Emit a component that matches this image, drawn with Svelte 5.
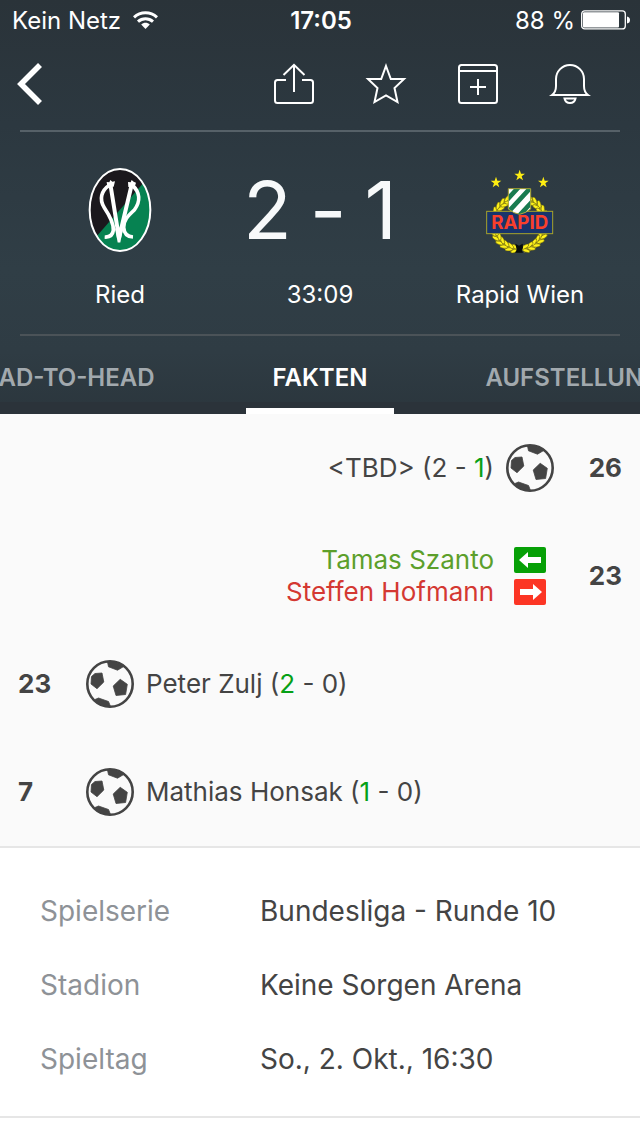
<script lang="ts">
	type MatchEvent = {
		minute: number;
		side: 'home' | 'away';
		type: 'goal' | 'sub';
		player: string;
		playerOut?: string;
		score?: [number, number];
	};

	const tabs = ['HEAD-TO-HEAD', 'FAKTEN', 'AUFSTELLUNG'];
	let activeTab = $state('FAKTEN');

	const events: MatchEvent[] = [
		{ minute: 26, side: 'away', type: 'goal', player: '<TBD>', score: [2, 1] },
		{
			minute: 23,
			side: 'away',
			type: 'sub',
			player: 'Tamas Szanto',
			playerOut: 'Steffen Hofmann'
		},
		{ minute: 23, side: 'home', type: 'goal', player: 'Peter Zulj', score: [2, 0] },
		{ minute: 7, side: 'home', type: 'goal', player: 'Mathias Honsak', score: [1, 0] }
	];

	const info = [
		{ label: 'Spielserie', value: 'Bundesliga - Runde 10' },
		{ label: 'Stadion', value: 'Keine Sorgen Arena' },
		{ label: 'Spieltag', value: 'So., 2. Okt., 16:30' }
	];

	const leafAngles = [
		24, 36, 48, 60, 72, 84, 96, 108, 120, 132, 144, 156, 168, 192, 204, 216, 228, 240, 252, 264, 276,
		288, 300, 312, 324, 336
	];
	const starPoints = '0,-17 4,-5 16,-5 6,3 10,15 0,8 -10,15 -6,3 -16,-5 -4,-5';
</script>

{#snippet ball()}
	<svg class="ball" viewBox="0 0 48 48" role="img" aria-label="Tor">
		<circle cx="24" cy="24" r="22.7" fill="none" stroke="#444" stroke-width="2.6" />
		<g fill="#444" stroke="#444" stroke-width=".8" stroke-linejoin="round">
			<path d="M9 13.5 16 13 17.8 22 11 28.7 5 24 5.5 16.5Z" />
			<path d="M34.2 19.3 41.3 24.3 39.6 34.5 30 35.5 27.2 26Z" />
			<path d="M21.5 2H28L38.5 6 31.5 10.2 22.5 6.8Z" />
			<path d="M9 39.5 12.5 38 22.5 41.5 24.5 46.5H20L13 44.5Z" />
		</g>
	</svg>
{/snippet}

<div class="app">
	<header>
		<div class="status">
			<div class="carrier">
				<span>Kein Netz</span>
				<svg width="25" height="18" viewBox="0 0 25 18" aria-hidden="true">
					<g fill="none" stroke="#fff" stroke-width="3">
						<path d="M1 6.3C7.5.2 17.5.2 24 6.3" />
						<path d="M5 10.6C9.3 6.7 15.7 6.7 20 10.6" />
					</g>
					<path d="M8.2 13.5C10.7 11.3 14.3 11.3 16.8 13.5L12.5 18Z" fill="#fff" />
				</svg>
			</div>
			<strong>17:05</strong>
			<div class="power">
				<span>88 %</span>
				<svg width="49" height="20" viewBox="0 0 49 20" aria-hidden="true">
					<rect x=".7" y=".9" width="43.6" height="18" rx="3" fill="none" stroke="#fff" stroke-width="1.3" />
					<rect x="2" y="2.3" width="36" height="15.3" rx="1" fill="#fff" />
					<path d="M46 6.5Q49 7 49 10T46 13.5Z" fill="#fff" />
				</svg>
			</div>
		</div>

		<nav class="actions">
			<button class="back" aria-label="Zurück">
				<svg width="28" height="44" viewBox="0 0 28 44">
					<path d="M24 3 5 22 24 41" fill="none" stroke="#fff" stroke-width="5.6" />
				</svg>
			</button>
			<button aria-label="Teilen">
				<svg width="44" height="44" viewBox="0 0 44 44">
					<path d="M14 18H5.5Q3 18 3 20.5V38.5Q3 41 5.5 41H38.5Q41 41 41 38.5V20.5Q41 18 38.5 18H30M22 30V3M11.5 13 22 2.8 32.5 13" />
				</svg>
			</button>
			<button aria-label="Favorit">
				<svg width="44" height="44" viewBox="0 0 44 44">
					<path d="M22 4 26.8 17H40L30.5 26 33.5 40 22 33.5 10.5 40 13.5 26 4 17H17.2Z" />
				</svg>
			</button>
			<button aria-label="Zum Kalender hinzufügen">
				<svg width="44" height="44" viewBox="0 0 44 44">
					<rect x="3" y="3" width="38" height="38" rx="2.5" />
					<path d="M3 9H41M22 17V33M14 25H30" />
				</svg>
			</button>
			<button aria-label="Benachrichtigungen">
				<svg width="44" height="44" viewBox="0 0 44 44">
					<path d="M4 33Q8 30 8 24V17A14 14 0 0 1 36 17V24Q36 30 40 33Z" />
					<path d="M16.5 36.5H27.5Q26.5 41 22 41T16.5 36.5Z" />
				</svg>
			</button>
		</nav>

		<section class="match">
			<div class="team">
				<svg width="80" height="100" viewBox="0 0 240 300" role="img" aria-label="Ried">
					<defs>
						<clipPath id="oval"><ellipse cx="120" cy="150" rx="91" ry="123" /></clipPath>
					</defs>
					<g clip-path="url(#oval)">
						<rect width="240" height="300" fill="#1b181d" />
						<path d="M240 12V300H0V286Z" fill="#068251" />
					</g>
					<ellipse cx="120" cy="150" rx="91" ry="123" fill="none" stroke="#fff" stroke-width="6" />
					<g fill="none" stroke="#fff" stroke-width="11">
						<path d="M89 75C63 92 57 119 73 143 87 164 102 188 100 211 98 227 88 232 74 231" />
						<path d="M91 72 117 234 155 74" stroke-width="12" />
						<path d="M156 75C181 97 182 124 163 150 145 167 130 180 131 202 132 218 140 230 159 231" />
						<path d="M109 205 117 247 125 205" stroke-width="8" />
					</g>
					<g fill="#fff">
						<path d="M80 66 88 67 91 60 97 65 105 64 101 80H82Z" />
						<path d="M144 66 152 67 155 60 161 65 168 68 164 81H145Z" />
					</g>
				</svg>
				<span>Ried</span>
			</div>
			<div class="result">
				<div class="score"><span>2</span><span>-</span><span>1</span></div>
				<span>33:09</span>
			</div>
			<div class="team">
				<svg width="90" height="100" viewBox="0 0 270 300" role="img" aria-label="Rapid Wien">
					<g fill="#ffee12">
						{#each [[63, 67], [134, 46], [205, 67]] as [x, y]}
							<polygon points={starPoints} transform="translate({x} {y})" />
						{/each}
					</g>
					<path
						d="M120 267A77 77 0 1 1 146 267"
						fill="none"
						stroke="#c9bd1c"
						stroke-width="21"
					/>
					<g fill="#fff21a" stroke="#4c480f" stroke-width="1.5">
						{#each leafAngles as angle}
							<g transform="rotate({angle} 133 191)">
								<ellipse cx="130" cy="108" rx="5" ry="12" transform="rotate({angle < 180 ? -60 : 60} 130 108)" />
								<ellipse cx="130" cy="120" rx="5" ry="12" transform="rotate({angle < 180 ? -110 : 110} 130 120)" />
							</g>
						{/each}
					</g>
					<path d="M121 251 132 257 143 251 144 264 140 270 144 278H120L125 269Z" fill="#080d0d" />
					<rect x="35" y="154" width="198" height="67" fill="#18346b" stroke="#a6a32c" stroke-width="3" />
					<defs>
						<clipPath id="shield"><path d="M100 86H167V147L152 157 134 163 117 158 100 147Z" /></clipPath>
					</defs>
					<g clip-path="url(#shield)">
						<rect x="98" y="86" width="70" height="80" fill="#fff" />
						<path
							d="M91 125 136 76M98 158 170 80M128 172 176 120"
							fill="none"
							stroke="#187b50"
							stroke-width="14"
						/>
					</g>
					<path d="M100 86H167V147L152 157 134 163 117 158 100 147Z" fill="none" stroke="#a9a434" stroke-width="3" />
					<text x="134" y="208" text-anchor="middle">RAPID</text>
				</svg>
				<span>Rapid Wien</span>
			</div>
		</section>

		<nav class="tabs">
			{#each tabs as tab}
				<button class:active={activeTab === tab} onclick={() => (activeTab = tab)}>{tab}</button>
			{/each}
		</nav>
	</header>

	<main>
		<ul class="events">
			{#each events as event}
				<li class={event.side}>
					<span class="minute">{event.minute}</span>
					{#if event.type === 'goal' && event.score}
						<span class="icon">{@render ball()}</span>
						<span class="detail">
							{event.player} ({#if event.side === 'home'}<em>{event.score[0]}</em> - {event
									.score[1]}{:else}{event.score[0]} - <em>{event.score[1]}</em>{/if})
						</span>
					{:else}
						<span class="icon">
							<svg width="32" height="26" viewBox="0 0 32 26" role="img" aria-label="Ein">
								<rect width="32" height="26" rx="2" fill="#06a006" />
								<path d="M5 13 14 5V10H27V16H14V21Z" fill="#fff" />
							</svg>
							<svg width="32" height="26" viewBox="0 0 32 26" role="img" aria-label="Aus">
								<rect width="32" height="26" rx="2" fill="#fc3524" />
								<path d="M28 13 19 5V10H6V16H19V21Z" fill="#fff" />
							</svg>
						</span>
						<span class="detail">
							<span class="in">{event.player}</span>
							<span class="out">{event.playerOut}</span>
						</span>
					{/if}
				</li>
			{/each}
		</ul>

		<dl class="info">
			{#each info as row}
				<div>
					<dt>{row.label}</dt>
					<dd>{row.value}</dd>
				</div>
			{/each}
		</dl>
	</main>
</div>

<style>
	:global(body) {
		margin: 0;
		background: #fff;
	}
	.app {
		font-family: Inter, 'Liberation Sans', sans-serif;
		font-size: 26px;
		color: #444;
		overflow: hidden;
	}
	button {
		font: inherit;
		color: inherit;
		background: none;
		border: 0;
		padding: 0;
		cursor: pointer;
	}
	svg {
		display: block;
		flex: none;
	}
	header {
		color: #fff;
		background: linear-gradient(#2a3339, #2c3840 30%, #303e46 65%, #2f3c44 85%, #2b363d);
	}
	.status {
		display: grid;
		grid-template-columns: 1fr auto 1fr;
		align-items: center;
		height: 40px;
		padding: 0 10px 0 12px;
		font-size: 24px;
	}
	.status strong {
		font-weight: 600;
	}
	.carrier,
	.power {
		display: flex;
		align-items: center;
		gap: 12px;
	}
	.power {
		justify-content: flex-end;
		gap: 6px;
	}
	.actions {
		display: flex;
		align-items: center;
		gap: 48px;
		height: 88px;
		margin: 0 20px;
		padding: 0 28px 2px 0;
		border-bottom: 2px solid #566168;
	}
	.actions .back {
		margin: 0 auto 0 -4px;
	}
	.actions button:not(.back) path,
	.actions rect {
		fill: none;
		stroke: #fff;
		stroke-width: 2;
	}
	.match {
		display: grid;
		grid-template-columns: 1fr 1fr 1fr;
		height: 202px;
		margin: 0 20px;
		border-bottom: 2px solid #4b5358;
		font-size: 24px;
		line-height: 30px;
		text-align: center;
	}
	.team,
	.result {
		display: flex;
		flex-direction: column;
		align-items: center;
		gap: 20px;
		padding-top: 28px;
	}
	.score {
		display: flex;
		gap: 18px;
		height: 100px;
		font-size: 80px;
		line-height: 100px;
		color: #f7f9fa;
	}
	.team text {
		font-family: Inter, sans-serif;
		font-size: 56px;
		font-weight: 700;
		fill: #fa3f2b;
	}
	.tabs {
		display: grid;
		grid-template-columns: minmax(0, 1fr) auto minmax(0, 1fr);
		column-gap: 64px;
		background: linear-gradient(transparent 66px, #2b333a 66px);
	}
	.tabs button {
		height: 78px;
		padding: 10px 27px 0;
		border-bottom: 6px solid transparent;
		font-size: 24px;
		font-weight: 600;
		color: #a2a9ae;
		white-space: nowrap;
		justify-self: start;
	}
	.tabs button:first-child {
		justify-self: end;
	}
	.tabs .active {
		color: #fff;
		border-color: #fff;
	}
	.events {
		list-style: none;
		margin: 0;
		padding: 0;
		background: #fafafa;
		border-bottom: 2px solid #e6e6e6;
	}
	.events li {
		display: flex;
		align-items: center;
		height: 108px;
		padding: 0 18px;
		line-height: 32px;
	}
	.events .away {
		flex-direction: row-reverse;
		text-align: right;
	}
	.minute {
		width: 56px;
		font-weight: 700;
	}
	.icon {
		display: flex;
		flex-direction: column;
		align-items: center;
		gap: 6px;
		width: 72px;
	}
	.ball {
		width: 48px;
		height: 48px;
	}
	.detail em {
		font-style: normal;
		color: #06a016;
	}
	.detail .in,
	.detail .out {
		display: block;
		color: #5c9f2b;
	}
	.detail .out {
		color: #d43832;
	}
	.info {
		margin: 0;
		padding: 26px 40px 20px;
		font-size: 28px;
		line-height: 74px;
		border-bottom: 2px solid #e6e6e6;
	}
	.info div {
		display: flex;
	}
	.info dt {
		width: 220px;
		color: #8e9297;
	}
	.info dd {
		margin: 0;
	}
</style>
